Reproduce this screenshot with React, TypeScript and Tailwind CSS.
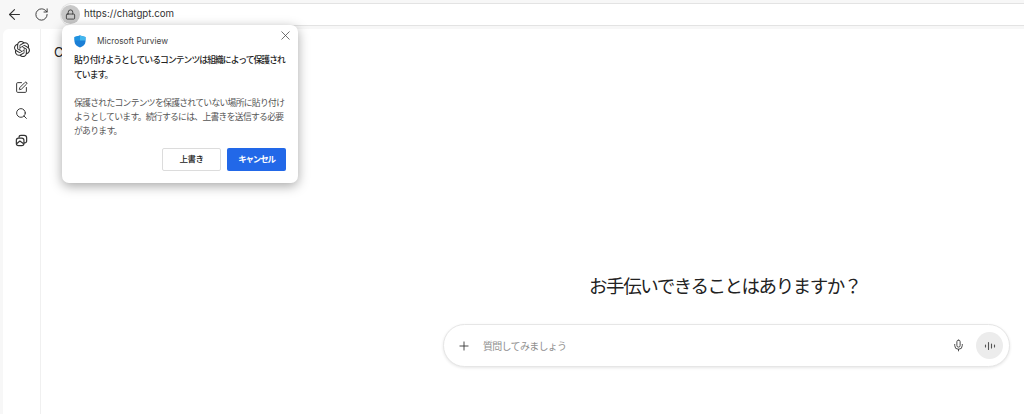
import { ArrowLeft, RotateCw, Lock, X, Plus, Mic, SquarePen, Search } from 'lucide-react';
import { SiOpenai } from 'react-icons/si';

const jp = "font-['Noto_Sans_CJK_JP','Noto_Sans',sans-serif]";

function LibraryIcon() {
  return (
    <svg width="13" height="13" viewBox="0 0 24 24" fill="none" stroke="#333" strokeWidth="2.200" strokeLinejoin="round">
      <rect x="2.500" y="7.500" width="14" height="14" rx="4" />
      <path d="M7.500 7V6a3.500 3.500 0 0 1 3.500-3.500h6A4.500 4.500 0 0 1 21.500 7v6a3.500 3.500 0 0 1-3.500 3.500h-1.500" />
      <path d="M3 18l6-5 7 5" />
    </svg>
  );
}

function Shield() {
  return (
    <svg width="12" height="13" viewBox="0 0 12 13">
      <path d="M6 0.500 11.500 2v4.500c0 3-2.500 5-5.500 6-3-1-5.500-3-5.500-6V2z" fill="#1b7fd6" />
      <path d="M6 0.500 11.500 2v3.500H6z" fill="#43b7ee" />
      <path d="M.5 2 6 0.500V5.500H.5z" fill="#1f93e0" />
    </svg>
  );
}

function VoiceIcon() {
  return (
    <svg width="12" height="12" viewBox="0 0 12 12" stroke="#555" strokeWidth="1.100" strokeLinecap="round">
      <path d="M1.500 5v2M4.500 2.500v7M7.500 4v4M10.500 5v2" />
    </svg>
  );
}

export default function App() {
  return (
    <div className={`relative flex h-[414px] w-[1024px] flex-col overflow-hidden bg-[#f7f7f7] ${jp}`}>
      {/* browser bar */}
      <div className="flex h-[29px] shrink-0 items-center bg-[#f7f7f7]">
        <ArrowLeft size={17} strokeWidth={1.500} className="ml-[6px] text-[#333]" />
        <RotateCw size={15} strokeWidth={1.500} className="ml-[11px] text-[#333]" />
        <div className="ml-[11px] flex h-[23px] flex-1 items-center rounded-l-full border border-r-0 border-[#e3e3e3] bg-white">
          <span className="flex h-[19px] w-[19px] items-center justify-center rounded-full bg-[#c8c8c8]">
            <Lock size={11} strokeWidth={1.800} className="text-[#333]" />
          </span>
          <span className="ml-[4px] font-['Inter'] text-[9.700px] text-[#333]">https://chatgpt.com</span>
        </div>
      </div>

      {/* page */}
      <div className="ml-[3px] flex flex-1 rounded-tl-[6px] bg-white">
        <div className="flex w-[38px] shrink-0 flex-col items-center border-r border-[#f0f0f0] pt-[12px]">
          <SiOpenai size={16} className="text-[#2f2f2f]" />
          <SquarePen size={13} strokeWidth={1.800} className="mt-[24px] text-[#333]" />
          <Search size={13} strokeWidth={1.800} className="mt-[13px] text-[#333]" />
          <div className="mt-[14px]">
            <LibraryIcon />
          </div>
        </div>

        <div className="flex flex-1 flex-col items-end pr-[14px] pt-[241px]">
          <div className="flex w-[567px] flex-col items-center">
            <h1 className="mr-[3px] text-[18.500px] leading-[30px] font-normal tracking-[-1.450px] text-[#222]">
              お手伝いできることはありますか？
            </h1>
            <div className="mt-[24px] flex h-[43px] w-full items-center rounded-full border border-[#e6e6e6] bg-white pl-[13px] pr-[6px] shadow-[0_1px_3px_rgba(0,0,0,0.1)]">
              <Plus size={14} strokeWidth={1.500} className="text-[#333]" />
              <span className="ml-[12px] text-[10px] tracking-[-0.700px] text-[#8f8f8f]">質問してみましょう</span>
              <Mic size={13} strokeWidth={1.600} className="ml-auto text-[#333]" />
              <span className="ml-[11px] flex h-[27px] w-[27px] items-center justify-center rounded-full bg-[#ececec]">
                <VoiceIcon />
              </span>
            </div>
          </div>
        </div>
      </div>

      {/* clipped letter behind the popup */}
      <span className="absolute left-[54px] top-[43px] font-['Inter'] text-[13px] text-[#222]">C</span>

      {/* purview popup */}
      <div className="absolute left-[62px] top-[25px] h-[158px] w-[236px] rounded-[7px] bg-white px-[12px] pt-[9px] shadow-[0_3px_12px_rgba(0,0,0,0.35)]">
        <X size={15} strokeWidth={1.200} className="absolute right-[5px] top-[3px] text-[#444]" />
        <div className="flex h-[15px] items-center">
          <Shield />
          <span className="ml-[11px] font-['Inter'] text-[8.300px] text-[#444]">Microsoft Purview</span>
        </div>
        <p className="mt-[3px] whitespace-nowrap text-[8.800px] leading-[15px] font-medium tracking-[-0.950px] text-[#222]">
          貼り付けようとしているコンテンツは組織によって保護され
          <br />
          ています。
        </p>
        <p className="mt-[14px] whitespace-nowrap text-[8.800px] leading-[14px] tracking-[-0.700px] text-[#555]">
          保護されたコンテンツを保護されていない場所に貼り付け
          <br />
          ようとしています。続行するには、上書きを送信する必要
          <br />
          があります。
        </p>
        <div className="mt-[10px] flex justify-end gap-[6px]">
          <button className="flex h-[23px] w-[59px] items-center justify-center rounded-[2px] border border-[#dcdcdc] bg-white pb-[2px] text-[8.500px] font-medium tracking-[-0.500px] text-[#222]">
            上書き
          </button>
          <button className="flex h-[23px] w-[59px] items-center justify-center rounded-[2px] bg-[#2268e8] pb-[2px] text-[8.500px] font-bold tracking-[-1.200px] text-white">
            キャンセル
          </button>
        </div>
      </div>
    </div>
  );
}
